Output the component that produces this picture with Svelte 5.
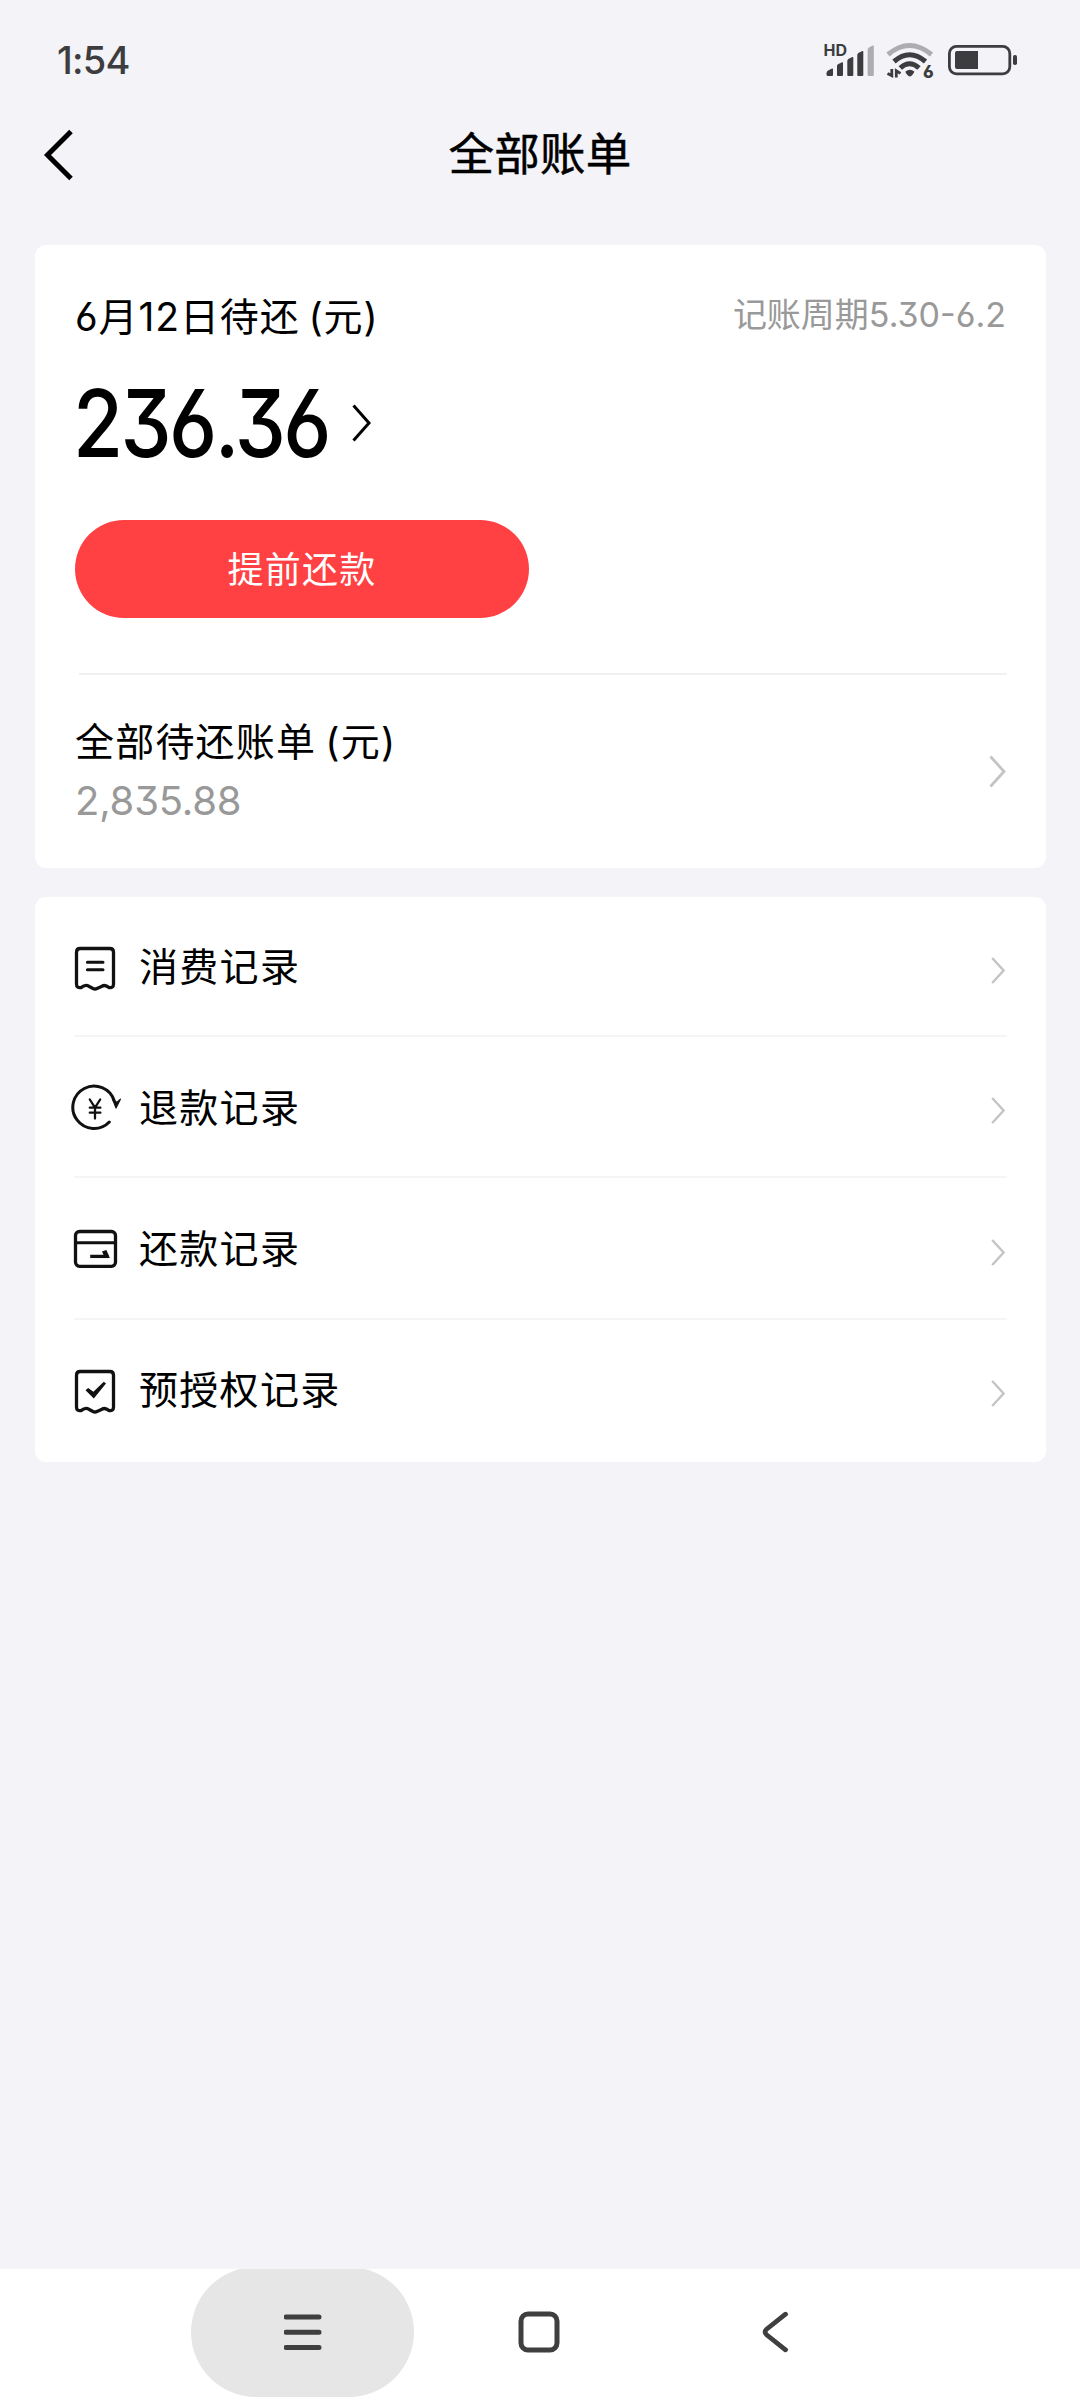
<script>
  const time = '1:54';

  let bill = {
    title: '6月12日待还 (元)',
    cycle: '记账周期5.30-6.2',
    amount: '236.36',
    total: '2,835.88'
  };

  const records = [
    { icon: 'receipt', label: '消费记录' },
    { icon: 'refund', label: '退款记录' },
    { icon: 'card', label: '还款记录' },
    { icon: 'check', label: '预授权记录' }
  ];
</script>

<div class="screen">
  <div class="status">
    <span class="time">{time}</span>
    <svg class="status-icons" width="200" height="44" viewBox="820 38 200 44">
      <text x="823.5" y="56" class="hd">HD</text>
      <g fill="#3d3d3f">
        <path d="M826.5 73 Q826.5 71 829 70 L832 68.5 Q833 68 833 69.5 V75 Q833 76 832 76 H828 Q826.5 76 826.5 74.5Z" />
        <path d="M837 66 Q837 65 838 64.3 L842 62.3 Q843 62 843 63 V75 Q843 76 842 76 H838 Q837 76 837 75Z" />
        <path d="M847.3 61 Q847.3 60 848.3 59 L852.3 57 Q853.3 56.6 853.3 58 V75 Q853.3 76 852.3 76 H848.3 Q847.3 76 847.3 75Z" />
        <path d="M857.3 55 Q857.3 54 858.3 53 L862.3 51 Q863.3 50.6 863.3 52 V75 Q863.3 76 862.3 76 H858.3 Q857.3 76 857.3 75Z" />
        <path fill="#adadb0" d="M867.6 50 Q867.6 48.5 868.6 47.7 L872.6 45.5 Q873.8 45.2 873.8 46.5 V75 Q873.8 76 872.8 76 H868.6 Q867.6 76 867.6 75Z" />
      </g>
      <g fill="none" stroke="#3d3d3f" stroke-width="5">
        <path stroke="#adadb0" d="M888 54.5 Q909.5 36.5 931.5 54.5" />
        <path d="M894 61.5 Q909.5 48 925.5 61.5" />
        <path d="M900.3 68 Q909.5 59.5 919 68" />
      </g>
      <path fill="#3d3d3f" d="M905.5 71.5 Q909.8 68 914.3 71.5 Q914.5 72.3 911.5 75.8 Q909.8 77.3 908.2 75.8 Q905 72.3 905.5 71.5Z" />
      <path fill="none" stroke="#3d3d3f" stroke-width="2.8" d="M891.8 69 V75.6 L887.5 73.4 M896.3 77.5 V70.8 L900.5 73.4" />
      <text x="923" y="78" class="six">6</text>
      <rect x="949.4" y="46.4" width="60.4" height="27.4" rx="7" fill="none" stroke="#3d3d3f" stroke-width="2.8" />
      <path fill="#3d3d3f" d="M957 51 H978 V69 H957 Q955 69 955 67 V53 Q955 51 957 51Z" />
      <rect x="1013" y="55" width="4" height="10" rx="1.8" fill="#3d3d3f" />
    </svg>
  </div>

  <header>
    <button class="back" aria-label="返回">
      <svg width="32" height="52" viewBox="0 0 32 52">
        <path d="M28 2.5 L4.5 26 L28 49.5" fill="none" stroke="#000" stroke-width="5" />
      </svg>
    </button>
    <h1>全部账单</h1>
  </header>

  <main>
    <section class="card bill">
      <div class="bill-head">
        <span class="label">{bill.title}</span>
        <span class="cycle">{bill.cycle}</span>
      </div>
      <div class="amount-row">
        <span class="amount">{bill.amount}</span>
        <svg width="20" height="38" viewBox="0 0 20 38">
          <path d="M1.5 1.5 L17 19 L1.5 36.5" fill="none" stroke="#000" stroke-width="3" />
        </svg>
      </div>
      <button class="repay">提前还款</button>
      <div class="total-row">
        <div class="total-text">
          <span class="label">全部待还账单 (元)</span>
          <span class="total">{bill.total}</span>
        </div>
        <svg width="18" height="33" viewBox="0 0 18 33">
          <path d="M1.5 1.5 L15 16.5 L1.5 31.5" fill="none" stroke="#c4c4c4" stroke-width="2.8" />
        </svg>
      </div>
    </section>

    <section class="card list">
      {#each records as record}
        <div class="row">
          <svg class="icon" width="54" height="54" viewBox="0 0 54 54" fill="none" stroke="#111" stroke-width="3.3" stroke-linejoin="round" stroke-linecap="round">
            {#if record.icon === 'receipt' || record.icon === 'check'}
              <path d="M9.3 8.5 H38.7 Q42.5 8.5 42.5 12.3 V44 Q42.5 48.3 38 47.6 Q34 44 30.5 46.5 L26 48.5 Q24 49.5 22 48.5 L17.8 46.2 Q14.5 44 10 47.6 Q5.5 48.3 5.5 44 V12.3 Q5.5 8.5 9.3 8.5Z" />
            {/if}
            {#if record.icon === 'receipt'}
              <path d="M16.4 22.2 H32 M16.4 29.8 H32" stroke-width="3" />
            {:else if record.icon === 'check'}
              <path fill="#111" stroke="none" d="M14.5 27.2 L17.2 25 L22.4 28.8 L32.8 18.8 L35 20.4 L22.8 35.5Z" />
            {:else if record.icon === 'refund'}
              <path d="M43.2 19.8 A21.2 21.2 0 1 0 38.3 41" stroke-width="3" />
              <path fill="#111" stroke-width="1.2" d="M41.5 18 L45.8 21.5 L49.4 18.2 L45 27Z" />
              <path stroke-width="2.3" d="M18.8 18.5 L24 26.7 L29.2 18.5 M24 26.7 V37.5 M18.8 26.7 H29.4 M18.8 31.7 H29.4" />
            {:else}
              <rect x="4.5" y="9.5" width="40" height="34.8" rx="4" />
              <path d="M5 20.8 H44" stroke-width="3" />
              <path d="M19.2 34.4 H37.5" stroke-linecap="butt" />
              <path fill="#111" stroke="none" d="M31 29.5 L35.4 28 L38.8 36 H34Z" />
            {/if}
          </svg>
          <span class="name">{record.label}</span>
          <svg class="arrow" width="15" height="27" viewBox="0 0 15 27">
            <path d="M1.2 1 L12.6 13.5 L1.2 26" fill="none" stroke="#c4c4c4" stroke-width="2.4" />
          </svg>
        </div>
      {/each}
    </section>
  </main>

  <nav>
    <button class="key pressed" aria-label="菜单">
      <svg width="38" height="38" viewBox="0 0 38 38">
        <path d="M2 4 H35 M2 19.2 H35 M2 34.4 H35" stroke="#3f3f3f" stroke-width="5" stroke-linecap="round" />
      </svg>
    </button>
    <button class="key" aria-label="主页">
      <svg width="42" height="42" viewBox="0 0 42 42">
        <rect x="3" y="3" width="36" height="36" rx="7" fill="none" stroke="#3f3f3f" stroke-width="5" />
      </svg>
    </button>
    <button class="key" aria-label="返回">
      <svg width="28" height="42" viewBox="0 0 28 42">
        <path d="M24.5 3.2 L5.6 18.2 Q2.6 21 5.6 23.8 L24.5 38.8" fill="none" stroke="#3f3f3f" stroke-width="4.8" stroke-linecap="round" />
      </svg>
    </button>
  </nav>
</div>

<style>
  :global(body) {
    background: #f3f3f8;
  }

  .screen {
    width: 1080px;
    height: 2400px;
    display: flex;
    flex-direction: column;
    background: #f3f3f8;
    color: #000;
    font-family: Inter, 'Noto Sans CJK SC', sans-serif;
    /* open six and flat-top three */
    font-feature-settings: 'cv03', 'cv09';
    overflow: hidden;
  }

  button {
    border: none;
    padding: 0;
    background: none;
    font: inherit;
    font-feature-settings: inherit;
  }

  svg {
    display: block;
    flex: none;
  }

  .status {
    height: 120px;
    box-sizing: border-box;
    padding: 0 60px 0 57px;
    display: flex;
    align-items: center;
    justify-content: space-between;
  }

  .time {
    font-size: 38px;
    font-weight: 500;
    letter-spacing: -0.8px;
    line-height: 46px;
    color: #3d3d3f;
  }

  .hd {
    font-size: 16px;
    font-weight: 700;
    fill: #3d3d3f;
  }

  .six {
    font-size: 17px;
    font-weight: 800;
    fill: #3d3d3f;
  }

  header {
    height: 70px;
    display: grid;
    grid-template-columns: 120px 1fr 120px;
    align-items: center;
  }

  .back {
    padding-left: 43px;
  }

  h1 {
    margin: 0;
    text-align: center;
    font-size: 45.5px;
    font-weight: 400;
    letter-spacing: 0.3px;
    line-height: 70px;
    -webkit-text-stroke: 0.5px #000;
  }

  main {
    flex: 1;
    padding: 55px 34px 0 35px;
    display: flex;
    flex-direction: column;
    gap: 29px;
  }

  .card {
    background: #fff;
    border-radius: 11px;
  }

  .bill {
    height: 623px;
    box-sizing: border-box;
    padding: 42px 40px 0;
    display: flex;
    flex-direction: column;
  }

  .bill-head {
    height: 60px;
    display: flex;
    justify-content: space-between;
    line-height: 60px;
  }

  .label {
    font-size: 39px;
    letter-spacing: 1.2px;
    word-spacing: -3px;
  }

  .bill-head .label {
    letter-spacing: 0.9px;
  }

  .cycle {
    font-size: 34px;
    color: #999;
    line-height: 56px;
  }

  .amount-row {
    height: 110px;
    margin-top: 21px;
    display: flex;
    align-items: center;
    gap: 25px;
  }

  /* condensed digits */
  .amount {
    width: 254px;
    margin-left: -2px;
    font-size: 94px;
    font-weight: 500;
    line-height: 110px;
    letter-spacing: -3px;
    white-space: nowrap;
    transform: scaleX(0.865);
    transform-origin: left;
  }

  .repay {
    width: 454px;
    height: 98px;
    margin-top: 42px;
    padding-bottom: 4px;
    border-radius: 49px;
    background: #ff4144;
    color: #fff;
    font-size: 36px;
    letter-spacing: 1.3px;
  }

  .total-row {
    flex: 1;
    margin: 55px -1px 0 0;
    padding: 2px 0 0;
    display: flex;
    align-items: center;
    justify-content: space-between;
    background: linear-gradient(#f1f1f1, #f1f1f1) 4px 0 / 100% 2px no-repeat;
  }

  .total-text {
    display: flex;
    flex-direction: column;
    line-height: 59px;
    margin-top: -2px;
  }

  .total {
    font-size: 40px;
    letter-spacing: -0.2px;
    color: #999;
  }

  .list {
    height: 565px;
    padding: 0 39px;
    display: grid;
    grid-template-rows: 140px 141px 142px 1fr;
  }

  .row {
    display: flex;
    align-items: center;
    padding-top: 2px;
    border-bottom: 2px solid #f5f5f5;
  }

  .row:last-child {
    border-bottom: none;
    padding: 0 0 2px;
  }

  .icon {
    margin-left: -3px;
  }

  .name {
    flex: 1;
    margin-left: 14px;
    font-size: 39px;
    letter-spacing: 1.3px;
    line-height: 60px;
  }

  .arrow {
    margin: 6px 1px 0 0;
  }

  nav {
    height: 131px;
    padding-left: 191px;
    display: flex;
    gap: 13px;
    background: #fff;
    overflow: hidden;
  }

  .key {
    width: 223px;
    height: 130px;
    margin-top: -2px;
    display: flex;
    align-items: center;
    justify-content: center;
    border-radius: 65px;
  }

  .pressed {
    background: #e6e6e6;
  }
</style>
